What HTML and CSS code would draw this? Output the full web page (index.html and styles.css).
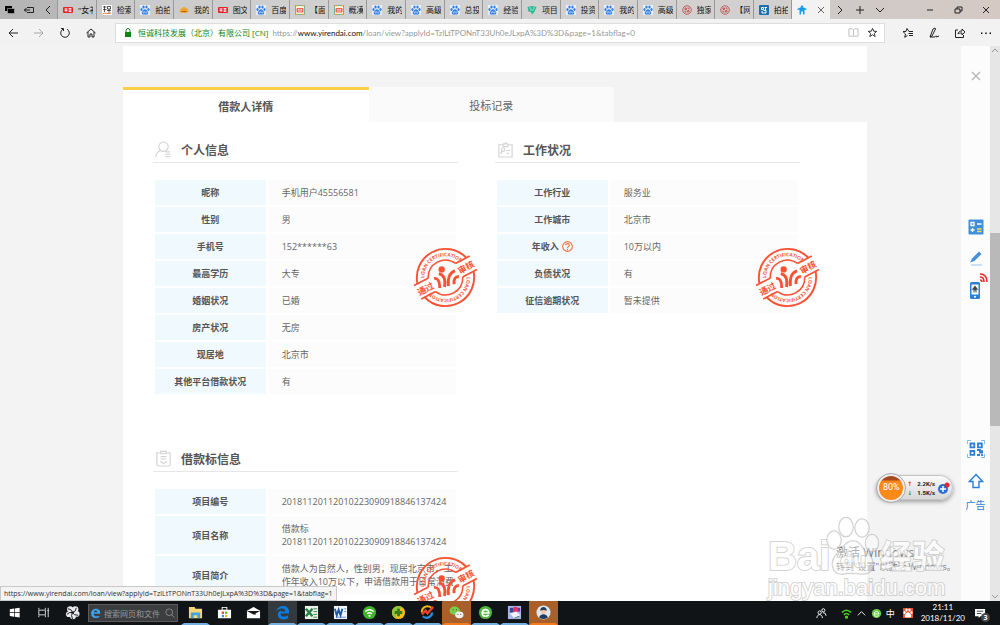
FILE: index.html
```
<!DOCTYPE html>
<html lang="zh-CN">
<head>
    <meta charset="UTF-8">
    <meta name="viewport" content="width=device-width, initial-scale=1.0">
    <title>借款人详情</title>
    <link rel="stylesheet" href="styles.css">
</head>
<body>

<!-- 图标 -->
<svg class="sprite" aria-hidden="true">
    <symbol id="paw" viewBox="0 0 20 20">
        <ellipse cx="3" cy="9" rx="2.2" ry="3"/><ellipse cx="7" cy="4" rx="2.3" ry="3.2"/>
        <ellipse cx="13" cy="4" rx="2.3" ry="3.2"/><ellipse cx="17" cy="9" rx="2.2" ry="3"/>
        <path d="M10 8.500c2.500 0 3.300 2.300 5 4 3 3 1.500 7-2 6.500-2-.3-4-.3-6 0-3.500.5-5-3.500-2-6.500 1.700-1.700 2.500-4 5-4z"/>
        <path d="M8.500 12v4h-2v-2.500M11.500 13v3h2.500v-3" fill="none" stroke="#fff" stroke-width="1"/>
    </symbol>
    <symbol id="redtag" viewBox="0 0 20 20">
        <rect y="4" width="20" height="12" rx="2" fill="#e1262b"/>
        <path d="M3 8h6M3 11h6M6 6v8M11 7h6M11 10h6M11 13h6M14 7v6" stroke="#fff" stroke-width="1.500"/>
    </symbol>
    <symbol id="photo" viewBox="0 0 20 20">
        <rect x="1" y="1" width="18" height="18" fill="#fff6d8" stroke="#3fa796" stroke-width="1.500"/>
        <path d="M1 1h5M14 1h5M1 19h5M14 19h5" stroke="#e8a33b" stroke-width="3"/>
        <rect x="3" y="6" width="14" height="9" rx="2" fill="#f0635a"/>
        <path d="M6 9h3M11 9h3M6 12h8" stroke="#fff" stroke-width="1.500"/>
    </symbol>
    <symbol id="ring" viewBox="0 0 20 20">
        <g fill="none" stroke="#bd3f42"><circle cx="10" cy="10" r="8.500" stroke-width="1.600"/>
        <path d="M6 6h3v3H6zM11 6h3v3M6 11v3h3M11 11h3v3h-3z" stroke-width="1.600"/></g>
    </symbol>
    <symbol id="yr" viewBox="0 0 20 20">
        <path d="M10 0l3 4h-2l7 3 2 3-5-1v10h-3v-6H8v6H5V9l-5 1 2-3 7-3H7z" fill="#159be8"/>
    </symbol>
    <symbol id="stamp" viewBox="-34 -34 68 68">
        <g transform="rotate(-28)" fill="none" stroke="#fb5133">
            <path d="M-28.900-8A30 30 0 0 1 28.900-8M-28.900 8A30 30 0 0 0 28.900 8" stroke-width="2"/>
            <path d="M-16.200-8A18 18 0 0 1 16.200-8M-16.200 8A18 18 0 0 0 16.200 8" stroke-width="1.600"/>
            <path d="M-33-8h17M16-8h17M-33 8h17M16 8h17" stroke-width="1.800"/>
            <path id="arc-top" d="M-21-7.300A22.200 22.200 0 0 1 21-7.300" stroke="none"/>
            <path id="arc-low" d="M21 7.300A22.200 22.200 0 0 1-21 7.300" stroke="none"/>
            <g fill="#fb5133" stroke="none" class="stamp-text">
                <text class="stamp-ring"><textPath href="#arc-top" startOffset="3">LOAN CERTIFICATION</textPath></text>
                <text class="stamp-ring"><textPath href="#arc-low" startOffset="3">LOAN CERTIFICATION</textPath></text>
                <text class="stamp-word" x="-24" y="4">通过</text>
                <text class="stamp-word" x="24" y="4">审核</text>
            </g>
        </g>
        <circle cx="-4" cy="-8.500" r="3.300" fill="#fb5133"/>
        <path d="M-12 1q6-1 6 10M-7-4q8 2 6 14M10-7q-8 2-7 16M14-1q-6 0-5 8" fill="none" stroke="#fb5133" stroke-width="3"/>
    </symbol>
</svg>

<!-- 浏览器标签 -->
<header class="tabstrip">
    <div class="strip-tools">
        <svg viewBox="0 0 10 10"><path d="M0 1h7v5H0z"/><path d="M2.500 3.500h7v5h-7z" stroke="#bbb" stroke-width=".6"/></svg>
        <svg viewBox="0 0 10 10" class="line"><path d="M3 2.500h6.500v5H3M0 5h6M2.500 3L.5 5l2 2"/></svg>
        <svg viewBox="0 0 10 10" class="line"><path d="M7 1L3 5l4 4"/></svg>
    </div>
    <nav class="tabs">
        <a class="tab" href="#"><svg><use href="#redtag"/></svg><span>"女衤</span></a>
        <a class="tab" href="#"><svg viewBox="0 0 20 20"><path fill="#fff" d="M0 0h20v20H0z"/><path d="M2 4h7M5 2v12M2 9h7M11 3h6v5h-6zM10 11h8M14 8v9" stroke="#222" stroke-width="1.500" fill="none"/><path d="M1 18c5-4 9 1 17-2" stroke="#f27a27" stroke-width="2" fill="none"/></svg><span>检索</span></a>
        <a class="tab" href="#"><svg class="baidu"><use href="#paw"/></svg><span>拍拍</span></a>
        <a class="tab" href="#"><svg viewBox="0 0 20 20"><path d="M1 13c0-3 3-7 6-7 1-3 6-3 7 0 3 0 5 4 5 7-1 4-17 4-18 0z" fill="#f3a42e"/><path d="M5 13h10" stroke="#b96512" stroke-width="2"/></svg><span>我的</span></a>
        <a class="tab" href="#"><svg><use href="#redtag"/></svg><span>图文</span></a>
        <a class="tab" href="#"><svg class="baidu"><use href="#paw"/></svg><span>百度</span></a>
        <a class="tab" href="#"><svg><use href="#photo"/></svg><span>【面</span></a>
        <a class="tab" href="#"><svg><use href="#photo"/></svg><span>概凑</span></a>
        <a class="tab" href="#"><svg class="baidu"><use href="#paw"/></svg><span>我的</span></a>
        <a class="tab" href="#"><svg class="baidu"><use href="#paw"/></svg><span>高级</span></a>
        <a class="tab" href="#"><svg class="baidu"><use href="#paw"/></svg><span>总投</span></a>
        <a class="tab" href="#"><svg class="baidu"><use href="#paw"/></svg><span>经验</span></a>
        <a class="tab" href="#"><svg viewBox="0 0 20 20"><path d="M1 4l9-2 9 2-4 9-5 6-2-5-5-1z" fill="#21b68d"/><path d="M4 6h5M12 6h4M6 10h8" stroke="#d9fff0" stroke-width="1.500"/></svg><span>项目</span></a>
        <a class="tab" href="#"><svg class="baidu"><use href="#paw"/></svg><span>投资</span></a>
        <a class="tab" href="#"><svg class="baidu"><use href="#paw"/></svg><span>我的</span></a>
        <a class="tab" href="#"><svg class="baidu"><use href="#paw"/></svg><span>高级</span></a>
        <a class="tab" href="#"><svg><use href="#ring"/></svg><span>独家</span></a>
        <a class="tab" href="#"><svg><use href="#ring"/></svg><span>【网</span></a>
        <a class="tab" href="#"><svg viewBox="0 0 20 20"><rect width="20" height="20" rx="2" fill="#1c6fad"/><path d="M5 5h4v4H5zM11 5h5M6 12v4h8v-5H9M13 5v7" stroke="#fff" stroke-width="2" fill="none"/></svg><span>拍拍</span></a>
        <a class="tab active" href="#"><svg><use href="#yr"/></svg><svg viewBox="0 0 10 10" class="line close"><path d="M2 2l6 6M8 2L2 8"/></svg></a>
    </nav>
    <div class="strip-tools after">
        <svg viewBox="0 0 10 10" class="line"><path d="M3 1l4 4-4 4"/></svg>
        <svg viewBox="0 0 10 10" class="line"><path d="M5 1v8M1 5h8"/></svg>
        <svg viewBox="0 0 10 10" class="line"><path d="M1 3l4 4 4-4"/></svg>
    </div>
    <div class="window-buttons">
        <button type="button" aria-label="最小化"><svg viewBox="0 0 10 10" class="line"><path d="M2 5h6"/></svg></button>
        <button type="button" aria-label="还原"><svg viewBox="0 0 10 10" class="line"><path d="M2 4h5v4H2zM4 4V2h5v4H7"/></svg></button>
        <button type="button" aria-label="关闭"><svg viewBox="0 0 10 10" class="line"><path d="M2 2l6 6M8 2L2 8"/></svg></button>
    </div>
</header>

<!-- 地址栏 -->
<div class="navbar">
    <div class="nav-buttons">
        <button type="button" aria-label="后退"><svg viewBox="0 0 12 12" class="line"><path d="M11 6H2M6 2L2 6l4 4"/></svg></button>
        <button type="button" aria-label="前进" class="off"><svg viewBox="0 0 12 12" class="line"><path d="M1 6h9M6 2l4 4-4 4"/></svg></button>
        <button type="button" aria-label="刷新"><svg viewBox="0 0 12 12" class="line"><path d="M4 2.200A4.300 4.300 0 1 0 8 2.200M2 1.500h2.500V4"/></svg></button>
        <button type="button" aria-label="主页"><svg viewBox="0 0 12 12" class="line"><path d="M1.500 6L6 2l4.500 4M3 5v5h2V7h2v3h2V5"/></svg></button>
    </div>
    <div class="address">
        <svg viewBox="0 0 8 10" class="lock"><path d="M1 4h6v5H1z" fill="#0c8410"/><path d="M2 4V2.500a2 2 0 0 1 4 0V4" fill="none" stroke="#0c8410"/></svg>
        <span class="owner">恒诚科技发展（北京）有限公司 [CN]</span>
        <span class="url">https://<b>www.yirendai.com</b>/loan/view?applyId=TzlLtTPONnT33Uh0eJLxpA%3D%3D&amp;page=1&amp;tabflag=0</span>
        <svg viewBox="0 0 12 12" class="line book"><path d="M1 2h4l1 1 1-1h4v8H7L6 11l-1-1H1zM6 3v7"/></svg>
        <svg viewBox="0 0 12 12" class="line"><path d="M6 1.500l1.300 3.100 3.300.2L8 7l.9 3.400L6 8.500l-2.900 1.900L4 7 1.400 4.800l3.300-.2z"/></svg>
    </div>
    <div class="nav-buttons hub">
        <button type="button" aria-label="收藏夹"><svg viewBox="0 0 12 12" class="line"><path d="M7 4.500L5 1.500 4 4.400l-3 .2L3.500 7l-.8 3.300L5.500 8.500M7 4.500h4M6.500 6.500H11M7 8.500h4"/></svg></button>
        <button type="button" aria-label="笔记"><svg viewBox="0 0 12 12" class="line"><path d="M2 10L5 2l2-1 .5 1L4 9l-2 1h5c1-2 2-1 1.500 0L11 9"/></svg></button>
        <button type="button" aria-label="共享"><svg viewBox="0 0 12 12" class="line"><path d="M4 3H1.500v7.500h8V8M4 7c0-2 2-3 4-3V2l3 3-3 3V6C6 6 5 6 4 7z"/></svg></button>
        <button type="button" aria-label="更多"><svg viewBox="0 0 12 12"><path d="M1 5.500h1.400v1.400H1zM5.300 5.500h1.400v1.400H5.300zM9.600 5.500H11v1.400H9.600z"/></svg></button>
    </div>
</div>

<!-- 网页 -->
<div class="viewport">
    <main class="page">
        <div class="container">
            <div class="summary"></div>
            <div class="detail-tabs">
                <button type="button" class="selected">借款人详情</button>
                <button type="button">投标记录</button>
            </div>
            <div class="detail">
                <section>
                    <h2><svg viewBox="0 0 18 18"><circle cx="9" cy="6" r="5"/><path d="M1 17c0-4 2-6 5-7M11 11.500h5M11 14h5M11 16.500h5"/></svg>个人信息</h2>
                    <table>
                        <tr><th>昵称</th><td>手机用户45556581</td></tr>
                        <tr><th>性别</th><td>男</td></tr>
                        <tr><th>手机号</th><td>152******63</td></tr>
                        <tr><th>最高学历</th><td>大专</td></tr>
                        <tr><th>婚姻状况</th><td>已婚</td></tr>
                        <tr><th>房产状况</th><td>无房</td></tr>
                        <tr><th>现居地</th><td>北京市</td></tr>
                        <tr><th>其他平台借款状况</th><td>有</td></tr>
                    </table>
                    <svg class="stamp"><use href="#stamp"/></svg>
                </section>
                <section>
                    <h2><svg viewBox="0 0 18 18"><path d="M6 4H2v13h14V4h-4M6.500 6V3h5v3zM9 3V1"/><circle cx="6.500" cy="9" r="1.800"/><path d="M4 14c0-2 1-3 2.500-3M10 10h4M10 13h3"/></svg>工作状况</h2>
                    <table>
                        <tr><th>工作行业</th><td>服务业</td></tr>
                        <tr><th>工作城市</th><td>北京市</td></tr>
                        <tr><th><span class="with-help">年收入<svg viewBox="0 0 12 12"><circle cx="6" cy="6" r="5.300"/><path d="M4 4.700c0-2.500 4-2.500 4 0C8 6 6 6 6 7.500M6 8.500V10"/></svg></span></th><td>10万以内</td></tr>
                        <tr><th>负债状况</th><td>有</td></tr>
                        <tr><th>征信逾期状况</th><td>暂未提供</td></tr>
                    </table>
                    <svg class="stamp"><use href="#stamp"/></svg>
                </section>
                <section>
                    <h2><svg viewBox="0 0 18 18"><path d="M5 3H2v12q0 2 2 2h10q2 0 2-2V3h-3M6 1.500h6V4H6zM6 7h6M6 9.500h6M5.500 12L9 14.500l3.500-2.500"/></svg>借款标信息</h2>
                    <table>
                        <tr><th>项目编号</th><td>20181120112010223090918846137424</td></tr>
                        <tr><th>项目名称</th><td>借款标<br>20181120112010223090918846137424</td></tr>
                        <tr><th>项目简介</th><td>借款人为自然人，性别男，现居北京市，工作年收入10万以下，申请借款用于日常消费</td></tr>
                    </table>
                    <svg class="stamp"><use href="#stamp"/></svg>
                </section>
            </div>
        </div>
    </main>

    <div class="scrollbar">
        <svg viewBox="0 0 8 8"><path d="M1 5l3-3 3 3"/></svg>
        <div class="track"><div class="thumb"></div></div>
        <svg viewBox="0 0 8 8"><path d="M1 3l3 3 3-3"/></svg>
    </div>

    <aside class="sidebar">
        <button type="button" class="dismiss" aria-label="关闭"><svg viewBox="0 0 16 16"><path d="M4 4l8 8M12 4l-8 8" stroke="#bbb" stroke-width="1.600"/></svg></button>
        <button type="button" aria-label="计算器"><svg viewBox="0 0 16 16"><rect x=".5" y=".5" width="15" height="15" rx="1" fill="#3f8fe0"/><path d="M3 3.500h3v3H3zM9 5h4.500M4.500 9v4M2.500 11h4" stroke="#fff" fill="none" stroke-width="1.300"/><path d="M9 10h4.500M9 12.500h4.500" stroke="#f3dc62" stroke-width="1.300"/></svg></button>
        <button type="button" aria-label="反馈"><svg viewBox="0 0 16 16"><path d="M2 12.500l2-4 7-7 2.500 2.500-7 7z" fill="#4790dc"/><path d="M3 15h11" stroke="#9bc4ee"/></svg></button>
        <button type="button" class="phone" aria-label="手机"><svg viewBox="0 0 18 26"><rect x="3" y="8" width="10" height="17" rx="1.500" fill="#2a7fd8"/><path d="M4.500 10.500h7v10h-7z" fill="#fff"/><path d="M8 11.500l1.500 2 2 2.500-2-.5v3h-1v-2h-1v2h-1v-3l-2 .5 2-2.500z" fill="#444"/><circle cx="8" cy="22.700" r="1" fill="#fff"/><path d="M13 3q4 0 4 5M13 0q7 0 7 8M13 6q2 0 2 2" fill="none" stroke="#e92a2a" stroke-width="1.600"/></svg></button>
        <button type="button" class="qr" aria-label="二维码"><svg viewBox="0 0 18 18"><path d="M.5 4V.5H4M14 .5h3.500V4M17.500 14v3.500H14M4 17.500H.5V14" fill="none" stroke="#8ab9ec"/><g fill="none" stroke="#2a7fd8" stroke-width="1.800"><path d="M3.500 3.500h3.800v3.800H3.500zM11 3.500h3.800v3.800H11zM3.500 11h3.800v3.800H3.500zM10 10h3v2.500h3M10 15h3M15 10v2M15 14v2"/></g></svg></button>
        <button type="button" aria-label="顶部"><svg viewBox="0 0 16 16"><path d="M8 1.500L14.500 8.500H11V14.500H5V8.500H1.500z" fill="none" stroke="#2a7fd8" stroke-width="1.400"/></svg></button>
        <a href="#" class="ad">广告</a>
    </aside>

    <div class="speed">
        <span class="percent">80%</span>
        <span class="rates"><span><i class="up">↑</i>2.2K/s</span><span><i class="down">↓</i>1.5K/s</span></span>
        <svg viewBox="0 0 14 14"><circle cx="6" cy="8" r="5" fill="#2c6fd4"/><path d="M6 5v6M3 8h6" stroke="#fff" stroke-width="1.500"/><circle cx="10" cy="4" r="2.500" fill="#e0262b"/></svg>
    </div>

    <div class="activate">
        <p class="activate-title">激活 Windows</p>
        <p>转到"设置"以激活 Windows。</p>
    </div>
    <div class="watermark">
        <div class="mark-row">
            <span class="bai">Bai</span>
            <span class="pad"><svg viewBox="0 0 54 58"><ellipse cx="8" cy="23" rx="7" ry="9"/><ellipse cx="20" cy="10" rx="7" ry="9.500"/><ellipse cx="36" cy="11" rx="7" ry="9"/><ellipse cx="46" cy="26" rx="6.500" ry="8.500"/><path d="M27 24c8 0 9 8 15 13 8 7 6 20-5 20-5 0-14-2-20 0-11 1-14-12-6-20 6-5 8-13 16-13z"/></svg><span>du</span></span>
            <span class="jing">经验</span>
        </div>
        <div class="mark-site">jingyan.baidu.com</div>
    </div>

    <div class="status">https://www.yirendai.com/loan/view?applyId=TzlLtTPONnT33Uh0eJLxpA%3D%3D&amp;page=1&amp;tabflag=1</div>
</div>

<!-- 任务栏 -->
<footer class="taskbar">
    <button type="button" class="app plain" aria-label="开始"><svg viewBox="0 0 16 16"><path d="M3 4.500l4.500-.7v4H3zM8.200 3.700L13.500 3v4.800H8.200zM3 8.500h4.500v4L3 11.800zM8.200 8.500h5.300v4.800l-5.300-.8z" fill="#fff"/></svg></button>
    <button type="button" class="app plain" aria-label="任务视图"><svg viewBox="0 0 16 16"><path d="M3 5V3M10 5V3M3 5.500h7v5H3zM3 11v2M10 11v2M13 3v10M12 6h2" fill="none" stroke="#ddd"/></svg></button>
    <button type="button" class="app plain" aria-label="浏览器"><svg viewBox="0 0 16 16"><g fill="#e8e8e8"><circle cx="5.500" cy="4.500" r="3.300"/><circle cx="11" cy="4.500" r="3.300"/><circle cx="12.500" cy="9.500" r="3"/><circle cx="8.500" cy="12" r="3.200"/><circle cx="4" cy="9.800" r="3"/></g><path d="M8 8q-1-4-5-4M8 8q4-1 4-5M8 8q1 3 6 3M8 8q-2 3 0 7M8 8q-3-1-6 2" stroke="#15181b" fill="none"/></svg></button>
    <div class="search">
        <svg viewBox="0 0 16 16"><path d="M13 9H4.500c1 4 5 4 8 2.500v2C7 16 1.500 14 1.500 8.500S9 0 13 5c.6 1 .8 2.500.6 4M5 7h5C9 4 6 4 5 7" fill="#3da3ea" fill-rule="evenodd"/></svg>
        <input type="text" aria-label="搜索" placeholder="搜索网页和文件">
        <svg viewBox="0 0 16 16"><circle cx="7" cy="7" r="4.500" fill="none" stroke="#999"/><path d="M10 10l4 4" stroke="#999"/></svg>
    </div>
    <div class="apps">
        <button type="button" class="app" aria-label="文件"><svg viewBox="0 0 16 16"><path d="M1 2h6l1 2h7v10H1z" fill="#f8d673"/><path d="M3 8h10v6h-3v-3H6v3H3z" fill="#3fa4df"/></svg></button>
        <button type="button" class="app idle" aria-label="商店"><svg viewBox="0 0 16 16"><path d="M1 5h14v9H1zM5 5V2h6v3" fill="#fff"/><path d="M6 5V3h4v2" fill="#15181b"/><path d="M5 7h2.500v2.500H5z" fill="#e5482f"/><path d="M8.500 7H11v2.500H8.500z" fill="#75b72c"/><path d="M5 10.500h2.500V13H5z" fill="#2c9be0"/><path d="M8.500 10.500H11V13H8.500z" fill="#f3b42c"/></svg></button>
        <button type="button" class="app idle" aria-label="邮件"><svg viewBox="0 0 16 16"><path d="M1 6l7-4 7 4v8H1z" fill="#fff"/><path d="M1 6.500h14l-5 2.500 1 1-3 0z" fill="#15181b"/></svg></button>
        <button type="button" class="app current" aria-label="Edge"><svg viewBox="0 0 16 16"><path d="M1 7C3-1 15-1 15 7v2H6c0 4 5 4 8 2v3C9 17 3 15 3 10c0-3 2-4 4-5-1 1-1 1-1 2h5C11 2 4 3 1 7z" fill="#0b7bdc"/></svg></button>
        <button type="button" class="app" aria-label="Excel"><svg viewBox="0 0 16 16"><path d="M1 1h14v14H1z" fill="#e7f2e6"/><path d="M10 4h4M10 7h4M10 10h4M10 13h4" stroke="#39864b"/><path d="M2 4l7 8M9 4l-7 8" stroke="#208044" stroke-width="2.500"/></svg></button>
        <button type="button" class="app" aria-label="Word"><svg viewBox="0 0 16 16"><path d="M1 1h14v14H1z" fill="#f1f6fd"/><path d="M12 4h2M12 7h2M3 13h11" stroke="#5b8bd0"/><path d="M2 4l2 7 2-6 2 6 2-7" fill="none" stroke="#2257a5" stroke-width="2"/></svg></button>
        <button type="button" class="app" aria-label="WiFi"><svg viewBox="0 0 16 16"><circle cx="8" cy="8" r="7" fill="#3fb52b"/><path d="M3.500 7q4.500-4 9 0M5.500 9.300q2.500-2 5 0" fill="none" stroke="#fff" stroke-width="1.500"/><circle cx="8" cy="11.500" r="1.200" fill="#fff"/></svg></button>
        <button type="button" class="app" aria-label="安全卫士"><svg viewBox="0 0 16 16"><circle cx="8" cy="8" r="7" fill="#f6bd14"/><path d="M1 8a7 7 0 0 1 11-5.700Q5 6 5 14.300A7 7 0 0 1 1 8z" fill="#8cc63a"/><path d="M8 4v8M4 8h8" stroke="#2f7f1a" stroke-width="3"/></svg></button>
        <button type="button" class="app" aria-label="行情"><svg viewBox="0 0 16 16"><path d="M12 3A6 6 0 0 0 2 8" fill="none" stroke="#f5b71b" stroke-width="2"/><path d="M3 12a6 6 0 0 0 10-4" fill="none" stroke="#2b8de0" stroke-width="2.500"/><path d="M2 10l4-4 2 3 6-7" fill="none" stroke="#e9402a" stroke-width="2.500"/></svg></button>
        <button type="button" class="app alert" aria-label="微信"><svg viewBox="0 0 16 16"><ellipse cx="6" cy="6" rx="5.500" ry="4.500" fill="#77cf46"/><ellipse cx="11" cy="10.500" rx="4.500" ry="3.700" fill="#f1f1f1"/><path d="M4 5h1M7.500 5h1M9 10h1M12 10h1" stroke="#444"/></svg></button>
        <button type="button" class="app" aria-label="360浏览器"><svg viewBox="0 0 16 16"><circle cx="8" cy="8" r="7" fill="#4fb83c"/><path d="M4.500 8.500h7C11.500 3.500 4.500 4 4.500 8.500s5 4 7 2" fill="none" stroke="#fff" stroke-width="1.800"/></svg></button>
        <button type="button" class="app" aria-label="图片"><svg viewBox="0 0 16 16"><path d="M1 1h14v14H1z" fill="#a9b6ec"/><path d="M3 3h4v5H3z" fill="#35469a"/><path d="M7 2h4v6H7z" fill="#d93a50"/><path d="M11 3h3v4h-3z" fill="#7e2ca6"/><path d="M3 9l7-2 4 4-6 3z" fill="#f3f1f8"/><path d="M8 14l5-2" stroke="#35894c"/></svg></button>
        <button type="button" class="app alert" aria-label="用户"><svg viewBox="0 0 16 16"><circle cx="8" cy="8" r="7.500" fill="#dce8f1"/><path d="M3.500 13.500c0-5 9-5 9 0-3 2-6 2-9 0z" fill="#243c59"/><circle cx="8" cy="6.500" r="3" fill="#f2c8a6"/><path d="M4.500 6c0-5 7-5 7 0-2-1-5-1-7 0z" fill="#243c59"/></svg></button>
    </div>
    <div class="tray">
        <svg viewBox="0 0 12 12" class="people"><circle cx="4" cy="5" r="1.800"/><path d="M1 11c0-5 6-5 6 0"/><circle cx="8" cy="2.500" r="1.700"/><path d="M7.500 5q3.500 0 3.500 3.500"/></svg>
        <svg viewBox="0 0 12 12" class="wifi"><path d="M1 5q5-5 10 0M3 7.500q3-3 6 0"/><circle cx="6" cy="10" r="1"/></svg>
        <svg viewBox="0 0 12 12" class="people"><path d="M2 8l4-4 4 4"/></svg>
        <svg viewBox="0 0 12 12"><circle cx="6" cy="6" r="5" fill="#6cce48"/><path d="M3.500 6.500h5C8.500 3 3.500 3 3.500 6.500s4 3 5 1.500" fill="none" stroke="#fff"/></svg>
        <span class="ime">中</span>
        <span class="ime-paw"><svg><use href="#paw"/></svg></span>
        <div class="clock"><span>21:11</span><span>2018/11/20</span></div>
        <span class="notice"><svg viewBox="0 0 14 12"><path d="M1 1h11v8H7l-2 2V9H1z" fill="#fff"/><path d="M3 3.500h7M3 6h5" stroke="#333"/></svg><b>3</b></span>
    </div>
</footer>

</body>
</html>
```

FILE: styles.css
```
* {
    box-sizing: border-box;
}
body {
    margin: 0;
    height: 100vh;
    display: flex;
    flex-direction: column;
    overflow: hidden;
    font-family: "Open Sans", "Noto Sans CJK SC", sans-serif;
    font-size: 9px;
    color: #666;
}
button {
    border: 0;
    padding: 0;
    background: none;
    font: inherit;
    color: inherit;
}
a {
    color: inherit;
    text-decoration: none;
}
svg {
    display: block;
    flex: none;
}
.sprite {
    position: absolute;
    width: 0;
    height: 0;
}
.line {
    fill: none;
    stroke: #222;
    stroke-width: 1;
}

/* 标签栏 */
.tabstrip {
    display: flex;
    height: 19px;
    flex: none;
    background: linear-gradient(90deg, #b4b4b4, #cfcfcf 40%, #cfcac7 85%, #d5c9c3);
    color: #111;
}
.strip-tools {
    display: flex;
    align-items: center;
    gap: 9px;
    width: 57px;
    padding-left: 5px;
}
.strip-tools svg,
.window-buttons svg {
    width: 10px;
    height: 10px;
}
.tabs {
    flex: 1;
    display: flex;
    min-width: 0;
}
.tab {
    flex: 1;
    min-width: 0;
    display: flex;
    align-items: center;
    gap: 5px;
    padding: 0 3px 0 5px;
    border-left: 1px solid #999;
    background: rgba(212, 212, 212, 0.6);
    font-size: 8px;
}
.tab svg {
    width: 10px;
    height: 10px;
}
.tab span {
    overflow: hidden;
    white-space: nowrap;
}
.baidu {
    fill: #2f7de8;
    background: #e8eefa;
}
.tab.active {
    background: #f2f2f2;
    gap: 9px;
}
.tab .close {
    stroke: #666;
}
.strip-tools.after {
    width: 86px;
    gap: 10px;
}
.window-buttons {
    width: 84px;
    display: flex;
    align-items: center;
    justify-content: space-around;
}

/* 地址栏 */
.navbar {
    display: flex;
    align-items: center;
    height: 27px;
    flex: none;
    background: #f2f2f2;
}
.nav-buttons {
    display: flex;
    width: 115px;
    padding-left: 7px;
    gap: 14px;
}
.nav-buttons svg {
    width: 12px;
    height: 12px;
}
.nav-buttons .off {
    opacity: 0.35;
}
.nav-buttons.hub {
    padding-left: 17px;
}
.address {
    flex: 1;
    min-width: 0;
    height: 20px;
    display: flex;
    align-items: center;
    padding: 0 6px 0 8px;
    border: 1px solid #ddd;
    background: #fff;
    font-size: 8px;
    white-space: nowrap;
}
.address svg {
    width: 11px;
    height: 11px;
}
.address .lock {
    width: 8px;
    height: 10px;
    margin-right: 6px;
}
.owner {
    color: #0c8410;
    margin-right: 4px;
}
.url {
    flex: 1;
    color: #999;
    font-family: Lato, sans-serif;
}
.url b {
    font-weight: normal;
    color: #111;
}
.address .book {
    margin-right: 8px;
    stroke: #bbb;
}

/* 页面 */
.viewport {
    position: relative;
    flex: 1;
    min-height: 0;
    display: flex;
    overflow: hidden;
    background: #f3f3f3;
}
.page {
    flex: 1;
    min-width: 0;
    overflow: hidden;
}
.container {
    width: 80%;
    max-width: 744px;
    margin: 0 auto;
}
.summary {
    height: 26px;
    margin-bottom: 15px;
    background: #fff;
}
.detail-tabs {
    display: flex;
    height: 35px;
}
.detail-tabs button {
    width: 33%;
    background: #fafafa;
    font-size: 11px;
}
.detail-tabs .selected {
    background: #fff;
    border-top: 3px solid #fccf45;
    font-weight: bold;
    color: #555;
}
.detail {
    display: grid;
    grid-template-columns: 1fr 1fr;
    gap: 50px 37px;
    padding: 15px 67px 30px 30px;
    background: #fff;
}
section {
    position: relative;
}
h2 {
    display: flex;
    align-items: center;
    gap: 9px;
    height: 26px;
    margin: 0 0 15px;
    padding-left: 2px;
    border-bottom: 1px solid #e6e6e6;
    font-size: 12px;
    color: #555;
}
h2 svg {
    width: 17px;
    height: 17px;
    fill: none;
    stroke: #d3d3d3;
    stroke-width: 1.2;
}
table {
    width: 100%;
    table-layout: fixed;
    border-collapse: separate;
    border-spacing: 2px;
    line-height: 13px;
}
th, td {
    padding: 6px 0;
}
th {
    width: 37%;
    background: #f0f9fe;
    color: #555;
}
td {
    padding-left: 14px;
    background: #fcfcfc;
}
.with-help {
    display: inline-flex;
    align-items: center;
    gap: 3px;
    height: 13px;
}
.with-help svg {
    width: 11px;
    height: 11px;
    fill: none;
    stroke: #f5703a;
    stroke-width: 1.2;
}
.stamp {
    position: absolute;
    top: 108px;
    right: -20px;
    width: 65px;
    height: 65px;
}
.stamp-text {
    font-weight: bold;
    text-anchor: middle;
}
.stamp-ring {
    font-size: 5px;
    text-anchor: start;
}
.stamp-word {
    font-size: 9px;
}

/* 滚动条 */
.scrollbar {
    width: 10px;
    display: flex;
    flex-direction: column;
    align-items: center;
    background: #e6e6e6;
}
.scrollbar svg {
    width: 8px;
    height: 10px;
    fill: none;
    stroke: #999;
}
.track {
    flex: 1;
    width: 100%;
}
.thumb {
    height: 36%;
    margin-top: 177px;
    background: #b9b9b9;
}

/* 侧栏 */
.sidebar {
    position: absolute;
    top: 0;
    right: 10px;
    bottom: 0;
    width: 29px;
    display: flex;
    flex-direction: column;
    align-items: center;
    gap: 15px;
    padding: 22px 0 88px;
    background: #fcfcfc;
}
.sidebar svg {
    width: 16px;
    height: 16px;
}
.sidebar .dismiss {
    margin-bottom: 120px;
}
.sidebar .phone {
    margin-top: -7px;
}
.sidebar .phone svg {
    width: 18px;
    height: 26px;
    overflow: visible;
}
.sidebar .qr {
    margin-top: auto;
}
.sidebar .qr svg {
    width: 18px;
    height: 18px;
}
.ad {
    margin-top: -7px;
    font-size: 10px;
    line-height: 16px;
    color: #2a7fd8;
}

/* 网速悬浮窗 */
.speed {
    position: absolute;
    right: 47px;
    bottom: 101px;
    display: flex;
    align-items: center;
    height: 25px;
    padding-right: 1px;
    border: 1px solid #c4c4c4;
    border-radius: 13px;
    background: linear-gradient(#fafafa, #d8d8d8);
    box-shadow: 0 2px 4px rgba(0, 0, 0, 0.35);
}
.percent {
    width: 28px;
    height: 28px;
    border: 2px solid #eee;
    border-radius: 50%;
    outline: 1px solid #aaa;
    background: linear-gradient(#a9471f 4px, #fc8a1a 5px);
    color: #fff;
    font-family: Roboto, sans-serif;
    font-size: 9px;
    line-height: 23px;
    text-align: center;
}
.rates {
    display: flex;
    flex-direction: column;
    padding: 0 2px;
    font-family: Roboto, sans-serif;
    font-size: 6px;
    line-height: 9px;
    color: #222;
    font-weight: bold;
}
.rates i {
    display: inline-block;
    width: 10px;
    font-family: "DejaVu Sans", sans-serif;
    font-style: normal;
}
.up {
    color: #e5352b;
}
.down {
    color: #1ba04c;
}
.speed svg {
    width: 14px;
    height: 14px;
}

/* 水印 */
.activate {
    position: absolute;
    right: 48px;
    bottom: 27px;
    width: 116px;
    color: #777;
    line-height: 14px;
    white-space: nowrap;
}
.activate p {
    margin: 0;
}
.activate-title {
    font-size: 12px;
}
.watermark {
    position: absolute;
    right: 54px;
    bottom: 0;
    width: 178px;
    color: #fff;
    opacity: 0.7;
    -webkit-text-stroke: 2px #c4c4c4;
    paint-order: stroke fill;
    font-weight: bold;
}
.mark-row {
    display: flex;
    align-items: flex-end;
    height: 58px;
}
.bai {
    font-family: "Liberation Sans", sans-serif;
    font-size: 40px;
    line-height: 38px;
}
.pad {
    display: grid;
    margin-left: -4px;
}
.pad svg,
.pad span {
    grid-area: 1 / 1;
}
.pad svg {
    width: 54px;
    height: 58px;
    fill: rgba(255, 255, 255, 0.6);
    stroke: #b4b4b4;
    stroke-width: 1.5;
}
.pad span {
    align-self: end;
    justify-self: center;
    font-size: 20px;
    line-height: 30px;
}
.jing {
    font-size: 32px;
    line-height: 38px;
}
.mark-site {
    font-family: "Liberation Sans", sans-serif;
    font-size: 22px;
    line-height: 26px;
    font-weight: normal;
}
.status {
    position: absolute;
    left: 0;
    bottom: 0;
    height: 15px;
    padding: 0 3px;
    border: 1px solid #c9c9c9;
    background: #f4f4f4;
    color: #333;
    font-size: 7px;
    line-height: 13px;
}

/* 任务栏 */
.taskbar {
    display: flex;
    align-items: stretch;
    height: 24px;
    flex: none;
    background: #101417;
    color: #fff;
}
.app {
    width: 29px;
    display: flex;
    align-items: center;
    justify-content: center;
    border-bottom: 2px solid #76b0e0;
    border-left: 3px solid #101417;
    border-right: 3px solid #101417;
}
.app svg {
    width: 15px;
    height: 15px;
}
.app.plain,
.app.idle {
    border-bottom-color: transparent;
}
.app.current {
    background: #34393d;
    border-left-color: #34393d;
    border-right-color: #34393d;
}
.app.alert {
    background: #a85f29;
    border-color: #a85f29;
    border-bottom-color: #f47b20;
}
.search {
    display: flex;
    align-items: center;
    gap: 2px;
    width: 90px;
    margin: 3px 3px 3px 1px;
    padding: 0 1px;
    border: 1px solid #5c5c5c;
    background: #3b3d3f;
}
.search svg {
    width: 12px;
    height: 12px;
}
.search input {
    flex: 1;
    min-width: 0;
    padding: 0;
    border: 0;
    background: none;
    font: inherit;
    font-size: 8px;
    color: #fff;
}
.search input::placeholder {
    color: #999;
}
.apps {
    display: flex;
}
.tray {
    margin-left: auto;
    display: flex;
    align-items: center;
    gap: 4px;
    padding-right: 10px;
}
.tray svg {
    width: 11px;
    height: 11px;
}
.people {
    fill: none;
    stroke: #fff;
}
.tray .wifi {
    margin-left: 10px;
    fill: none;
    stroke: #4fd321;
    stroke-width: 1.6;
}
.ime {
    font-size: 9px;
}
.ime-paw {
    margin: 0 4px;
    background: #e9532f;
    fill: #fff;
}
.ime-paw svg {
    width: 10px;
    height: 10px;
}
.clock {
    display: flex;
    flex-direction: column;
    align-items: center;
    font-family: Lato, sans-serif;
    font-size: 8px;
    line-height: 11px;
}
.notice {
    display: flex;
    align-items: flex-end;
    margin-left: 5px;
}
.tray .notice svg {
    width: 13px;
}
.notice b {
    width: 9px;
    height: 9px;
    margin: 0 0 -3px -6px;
    border-radius: 50%;
    background: #444;
    font-size: 7px;
    line-height: 9px;
    text-align: center;
}
```
